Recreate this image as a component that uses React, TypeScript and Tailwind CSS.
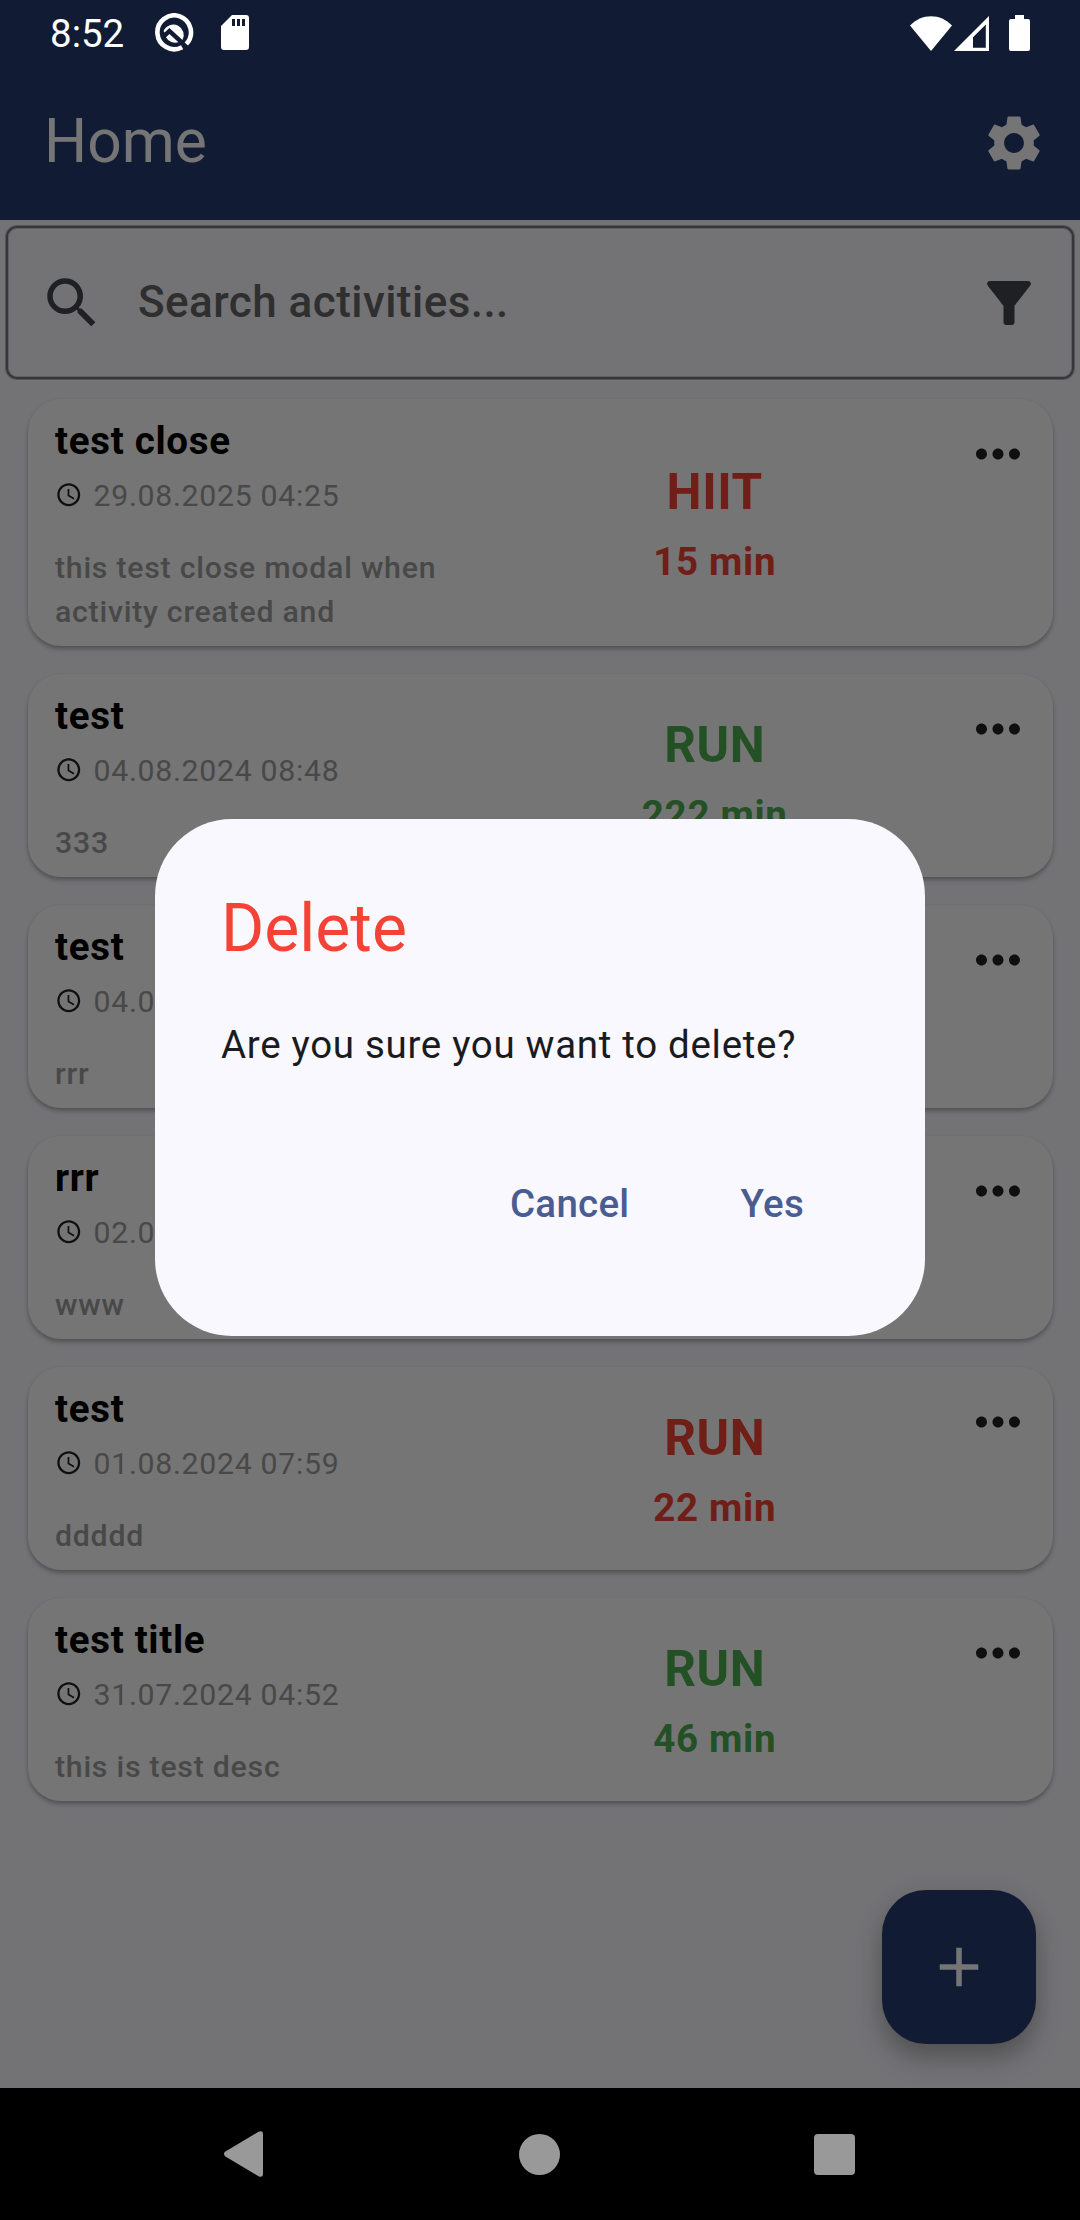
import React from "react";
import {
  MdAccessTime,
  MdAdd,
  MdFilterAlt,
  MdMoreHoriz,
  MdSearch,
  MdSettings,
} from "react-icons/md";

type Activity = {
  title: string;
  date: string;
  description: string;
  kind?: string;
  duration?: string;
  color?: string;
};

const RED = "text-[#f44336]";
const GREEN = "text-[#4caf50]";

const activities: Activity[] = [
  { title: "test close", date: "29.08.2025 04:25", description: "this test close modal when activity created and", kind: "HIIT", duration: "15 min", color: RED },
  { title: "test", date: "04.08.2024 08:48", description: "333", kind: "RUN", duration: "222 min", color: GREEN },
  { title: "test", date: "04.0", description: "rrr" },
  { title: "rrr", date: "02.0", description: "www" },
  { title: "test", date: "01.08.2024 07:59", description: "ddddd", kind: "RUN", duration: "22 min", color: RED },
  { title: "test title", date: "31.07.2024 04:52", description: "this is test desc", kind: "RUN", duration: "46 min", color: GREEN },
];

function StatusBar() {
  return (
    <div className="relative z-20 flex h-[66px] items-center pl-[50px] pr-[50px] text-white">
      <span className="w-[105px] text-[38.5px] leading-[68px]"><span className="block pt-[2px]">8:52</span></span>
      <svg className="h-[40px] w-[39px]" viewBox="0 0 39 40" fill="none">
        <path d="M27.1 34.2A16.800 16.900 0 1 1 31.300 31" stroke="white" strokeWidth="4.600" />
        <path d="M8.900 17A10.500 10.500 0 1 1 27.500 27L14.400 15 9.600 19.600Q8.300 18.500 8.900 17z" fill="white" />
        <path d="M14.400 21 23.400 29.300A10.500 10.500 0 0 1 11 24.200z" fill="white" />
      </svg>
      <svg className="ml-[27px] h-[36px] w-[28px]" viewBox="0 0 28 36">
        <path fillRule="evenodd" fill="white" d="M11 0h14a3 3 0 0 1 3 3v29a3 3 0 0 1-3 3H3a3 3 0 0 1-3-3V11zM11 4v7h3V4zm5 0v7h3V4zm5 0v7h3V4z" />
      </svg>
      <svg className="ml-auto h-[35px] w-[42px]" viewBox="0 0 42 35">
        <path fill="white" d="M0 9.5C11.500-3 30.500-3 42 9.500L21 35z" />
      </svg>
      <svg className="ml-[2px] h-[35px] w-[35px]" viewBox="0 0 35 35">
        <path fillRule="evenodd" fill="white" d="M35 0v35H0zM31.800 8.500 19 21.200V31.800h12.800z" />
      </svg>
      <svg className="ml-[20px] h-[36px] w-[21px]" viewBox="0 0 21 36">
        <path fill="white" d="M6 0h9v4h4a2 2 0 0 1 2 2v28a2 2 0 0 1-2 2H2a2 2 0 0 1-2-2V6a2 2 0 0 1 2-2h4z" />
      </svg>
    </div>
  );
}

function ActivityCard({ item }: { item: Activity }) {
  return (
    <article className="flex rounded-[33px] bg-white pl-[27.5px] pr-[22px] shadow-[0_3px_4px_rgba(0,0,0,0.28),0_0_3px_rgba(0,0,0,0.04)]">
      <div className="w-[410px] pb-[12.5px] pt-[14px]">
        <h2 className="text-[38.5px] font-bold leading-[55px] tracking-[0.69px] text-black">{item.title}</h2>
        <div className="mt-[6px] flex h-[43px] items-center">
          <MdAccessTime className="size-[27.5px] text-[#212121]" />
          <span className="ml-[11px] whitespace-nowrap text-[30.25px] leading-[43px] tracking-[0.69px] text-[#9e9e9e]">{item.date}</span>
        </div>
        <p className="mt-[29px] text-[30.25px] font-medium leading-[44px] tracking-[0.76px] text-[#9e9e9e]">
          <span className="block w-[400px]">{item.description}</span>
        </p>
      </div>
      <div className={`flex flex-1 flex-col items-center justify-center gap-[6px] font-bold ${item.color ?? ""}`}>
        {item.kind && <span className="text-[49.5px] leading-[72px] tracking-[0.6px]">{item.kind}</span>}
        {item.duration && <span className="text-[38.5px] leading-[55px] tracking-[0.69px]">{item.duration}</span>}
      </div>
      <button className="mt-[22.5px] size-[66px]">
        <MdMoreHoriz className="size-[66px] text-[#212121]" />
      </button>
    </article>
  );
}

function DeleteDialog() {
  return (
    <div className="absolute inset-x-0 bottom-[132px] top-[66px] z-20 flex items-center justify-center">
      <div className="h-[517px] w-[770px] rounded-[77px] bg-[#faf8ff] px-[66px] pt-[66px]">
        <h1 className="text-[66px] leading-[88px] text-[#f44336]">Delete</h1>
        <p className="mt-[44px] text-[38.5px] leading-[55px] tracking-[0.69px] text-[#1a1b21]">Are you sure you want to delete?</p>
        <div className="mt-[104px] flex justify-end gap-[111px] pr-[55px] text-[38.5px] font-medium leading-[55px] tracking-[0.275px] text-[#495d92]">
          <button>Cancel</button>
          <button>Yes</button>
        </div>
      </div>
    </div>
  );
}

function NavigationBar() {
  return (
    <nav className="relative z-20 flex h-[132px] items-center bg-black pl-[224px] pr-[225px]">
      <svg className="h-[46px] w-[39px]" viewBox="0 0 39 46">
        <path fill="#999" d="M1 20.800 34.500.8Q39-1 39 3.500v39Q39 47 34.500 45.200L1 25.200Q-1 23 1 20.800z" />
      </svg>
      <div className="ml-auto mr-[254px] size-[41px] rounded-full bg-[#999]" />
      <div className="size-[41px] rounded-[4px] bg-[#999]" />
    </nav>
  );
}

export default function App() {
  return (
    <div className="relative flex h-[2220px] w-[1080px] flex-col overflow-hidden bg-[#faf8ff] font-['Roboto',sans-serif]">
      <header className="h-[220px] bg-[#273d71]">
        <StatusBar />
        <div className="flex h-[154px] items-center justify-between pl-[44px] pr-[33px] text-white">
          <span className="pb-[4px] text-[60.5px] leading-[77px]">Home</span>
          <MdSettings className="size-[66px]" />
        </div>
      </header>
      <main className="flex-1">
        <div className="mx-[6px] mt-[6px] flex h-[153px] items-center rounded-[11px] border-2 border-[#757780] pl-[30.500px] pr-[30px] shadow-[0_0_0_1px_rgba(117,119,128,0.5),inset_0_0_0_1px_rgba(117,119,128,0.3)]">
          <MdSearch className="size-[66px] text-[#44464f]" />
          <span className="ml-[33.5px] pb-[1px] text-[44px] font-medium leading-[66px] tracking-[0.45px] text-[#666669]">Search activities...</span>
          <MdFilterAlt className="ml-auto size-[66px] text-[#44464f]" />
        </div>
        <div className="mt-[19.5px] flex flex-col gap-[27.5px] px-[27.5px]">
          {activities.map((item) => (
            <ActivityCard key={item.date} item={item} />
          ))}
        </div>
      </main>
      <NavigationBar />
      <button className="absolute bottom-[176px] right-[44px] flex size-[154px] items-center justify-center rounded-[44px] bg-[#273d71] text-white shadow-[0_15px_26px_rgba(0,0,0,0.25),0_3px_24px_rgba(0,0,0,0.08)]">
        <MdAdd className="size-[66px]" />
      </button>
      <div className="absolute inset-0 z-10 bg-black/54" />
      <DeleteDialog />
    </div>
  );
}
